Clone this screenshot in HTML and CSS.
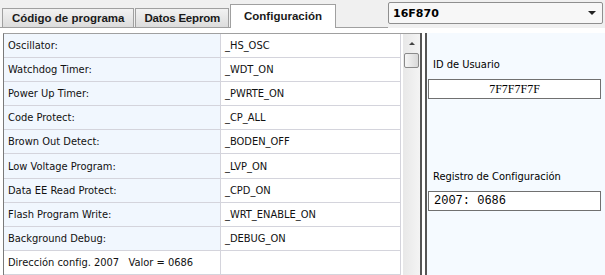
FILE: index.html
```html
<!DOCTYPE html>
<html lang="es">
<head>
  <meta charset="UTF-8">
  <title>Configuración</title>
  <link rel="stylesheet" href="styles.css">
</head>
<body>
  <div class="top">
    <div class="tabs">
      <div class="tab">Código de programa</div>
      <div class="tab">Datos Eeprom</div>
      <div class="tab active">Configuración</div>
    </div>
    <div class="select">
      <span>16F870</span>
      <span class="arrow"></span>
    </div>
  </div>

  <div class="page">
    <div class="grid-wrap">
      <table class="grid">
        <tr><td class="name">Oscillator:</td><td>_HS_OSC</td></tr>
        <tr><td class="name">Watchdog Timer:</td><td>_WDT_ON</td></tr>
        <tr><td class="name">Power Up Timer:</td><td>_PWRTE_ON</td></tr>
        <tr><td class="name">Code Protect:</td><td>_CP_ALL</td></tr>
        <tr><td class="name">Brown Out Detect:</td><td>_BODEN_OFF</td></tr>
        <tr><td class="name">Low Voltage Program:</td><td>_LVP_ON</td></tr>
        <tr><td class="name">Data EE Read Protect:</td><td>_CPD_ON</td></tr>
        <tr><td class="name">Flash Program Write:</td><td>_WRT_ENABLE_ON</td></tr>
        <tr><td class="name">Background Debug:</td><td>_DEBUG_ON</td></tr>
        <tr><td class="name plain">Dirección config. 2007&nbsp;&nbsp;&nbsp;Valor = 0686</td><td></td></tr>
      </table>
      <div class="scrollbar">
        <div class="sb-arrow"></div>
        <div class="sb-thumb"></div>
      </div>
    </div>

    <div class="side">
      <div class="label first">ID de Usuario</div>
      <div class="box center">7F7F7F7F</div>
      <div class="label second">Registro de Configuración</div>
      <div class="box">2007: 0686</div>
    </div>
  </div>
</body>
</html>
```

FILE: styles.css
```css
body {
  margin: 0;
  width: 605px;
  height: 275px;
  overflow: hidden;
  background-color: #f0f0f0;
  font-family: "Liberation Sans", Arial, sans-serif;
  font-size: 12px;
  color: #000;
}
.top {
  display: flex;
  justify-content: space-between;
  height: 28px;
}
.tabs {
  display: flex;
  align-items: flex-end;
  padding-left: 2px;
  flex: 1;
  border-bottom: 1px solid #a0a0a0;
  box-sizing: border-box;
}
.tab {
  height: 18px;
  line-height: 18px;
  padding: 0 9px;
  margin-right: 1px;
  background: linear-gradient(#f2f2f2, #dcdcdc);
  border: 1px solid #a0a0a0;
  border-bottom: none;
  font-family: "Liberation Sans", Arial, sans-serif;
  font-weight: bold;
  font-size: 11.5px;
  color: #1a1a1a;
}
.tab + .tab {
  padding: 0 8px;
  letter-spacing: -0.2px;
}
.tab.active {
  height: 23px;
  line-height: 22px;
  padding: 0 13px;
  letter-spacing: 0;
  background: #fff;
  margin-bottom: -1px;
}
.select {
  width: 215px;
  height: 22px;
  margin: 2px 2px 0 0;
  border: 1px solid #8f8f8f;
  border-radius: 2px;
  background: #f7f7f7;
  display: flex;
  align-items: center;
  justify-content: space-between;
  padding: 0 6px 0 4px;
  box-sizing: border-box;
  font-family: "DejaVu Sans", sans-serif;
  font-weight: bold;
  font-size: 11px;
}
.arrow {
  width: 0;
  height: 0;
  border-left: 4px solid transparent;
  border-right: 4px solid transparent;
  border-top: 4px solid #222;
}
.page {
  display: flex;
  background: #fff;
  height: 247px;
  padding-top: 5px;
  box-sizing: border-box;
}
.grid-wrap {
  display: flex;
  margin-left: 3px;
  width: 416px;
  border-left: 1px solid #7a7a7a;
  border-top: 1px solid #a0a0a0;
}
.grid {
  border-collapse: collapse;
  width: 397px;
  font-family: "DejaVu Sans Condensed", "DejaVu Sans", sans-serif;
  font-size: 11px;
}
.grid td {
  height: 23px;
  padding: 0 0 0 4px;
  border-bottom: 1px solid #d4d4dc;
  border-right: 1px solid #d4d4dc;
  color: #111;
  white-space: nowrap;
}
.grid td.name {
  width: 212px;
  background: #f1f7fe;
}
.grid td.plain {
  background: #fff;
}
.scrollbar {
  width: 17px;
  margin-left: 2px;
  background: linear-gradient(90deg, #e8e8e8, #f4f4f4);
  display: flex;
  flex-direction: column;
  align-items: center;
}
.sb-arrow {
  margin-top: 8px;
  width: 0;
  height: 0;
  border-left: 3px solid transparent;
  border-right: 3px solid transparent;
  border-bottom: 3px solid #444;
}
.sb-thumb {
  margin-top: 8px;
  width: 15px;
  height: 15px;
  border: 1px solid #8a8a8a;
  border-radius: 2px;
  background: linear-gradient(90deg, #f6f6f6, #d8d8d8);
  box-sizing: border-box;
}
.side {
  flex: 1;
  border-left: 2px solid #555;
  box-shadow: inset 3px 0 0 #fff, inset 5px 0 0 #555;
  background: #f5faff;
  padding-left: 6px;
  padding-right: 4px;
  display: flex;
  flex-direction: column;
}
.label {
  font-family: "DejaVu Sans Condensed", "DejaVu Sans", sans-serif;
  font-size: 11px;
  padding-left: 5px;
}
.label.first {
  margin-top: 25px;
  margin-bottom: 8px;
}
.label.second {
  margin-top: 71px;
  margin-bottom: 8px;
}
.box {
  height: 20px;
  line-height: 18px;
  border: 1px solid #707070;
  background: #fff;
  box-sizing: border-box;
  font-family: "Liberation Mono", monospace;
  font-size: 12px;
  padding-left: 5px;
}
.box.center {
  text-align: center;
  font-family: "Liberation Serif", serif;
  font-size: 12px;
  padding-left: 0;
}
```
